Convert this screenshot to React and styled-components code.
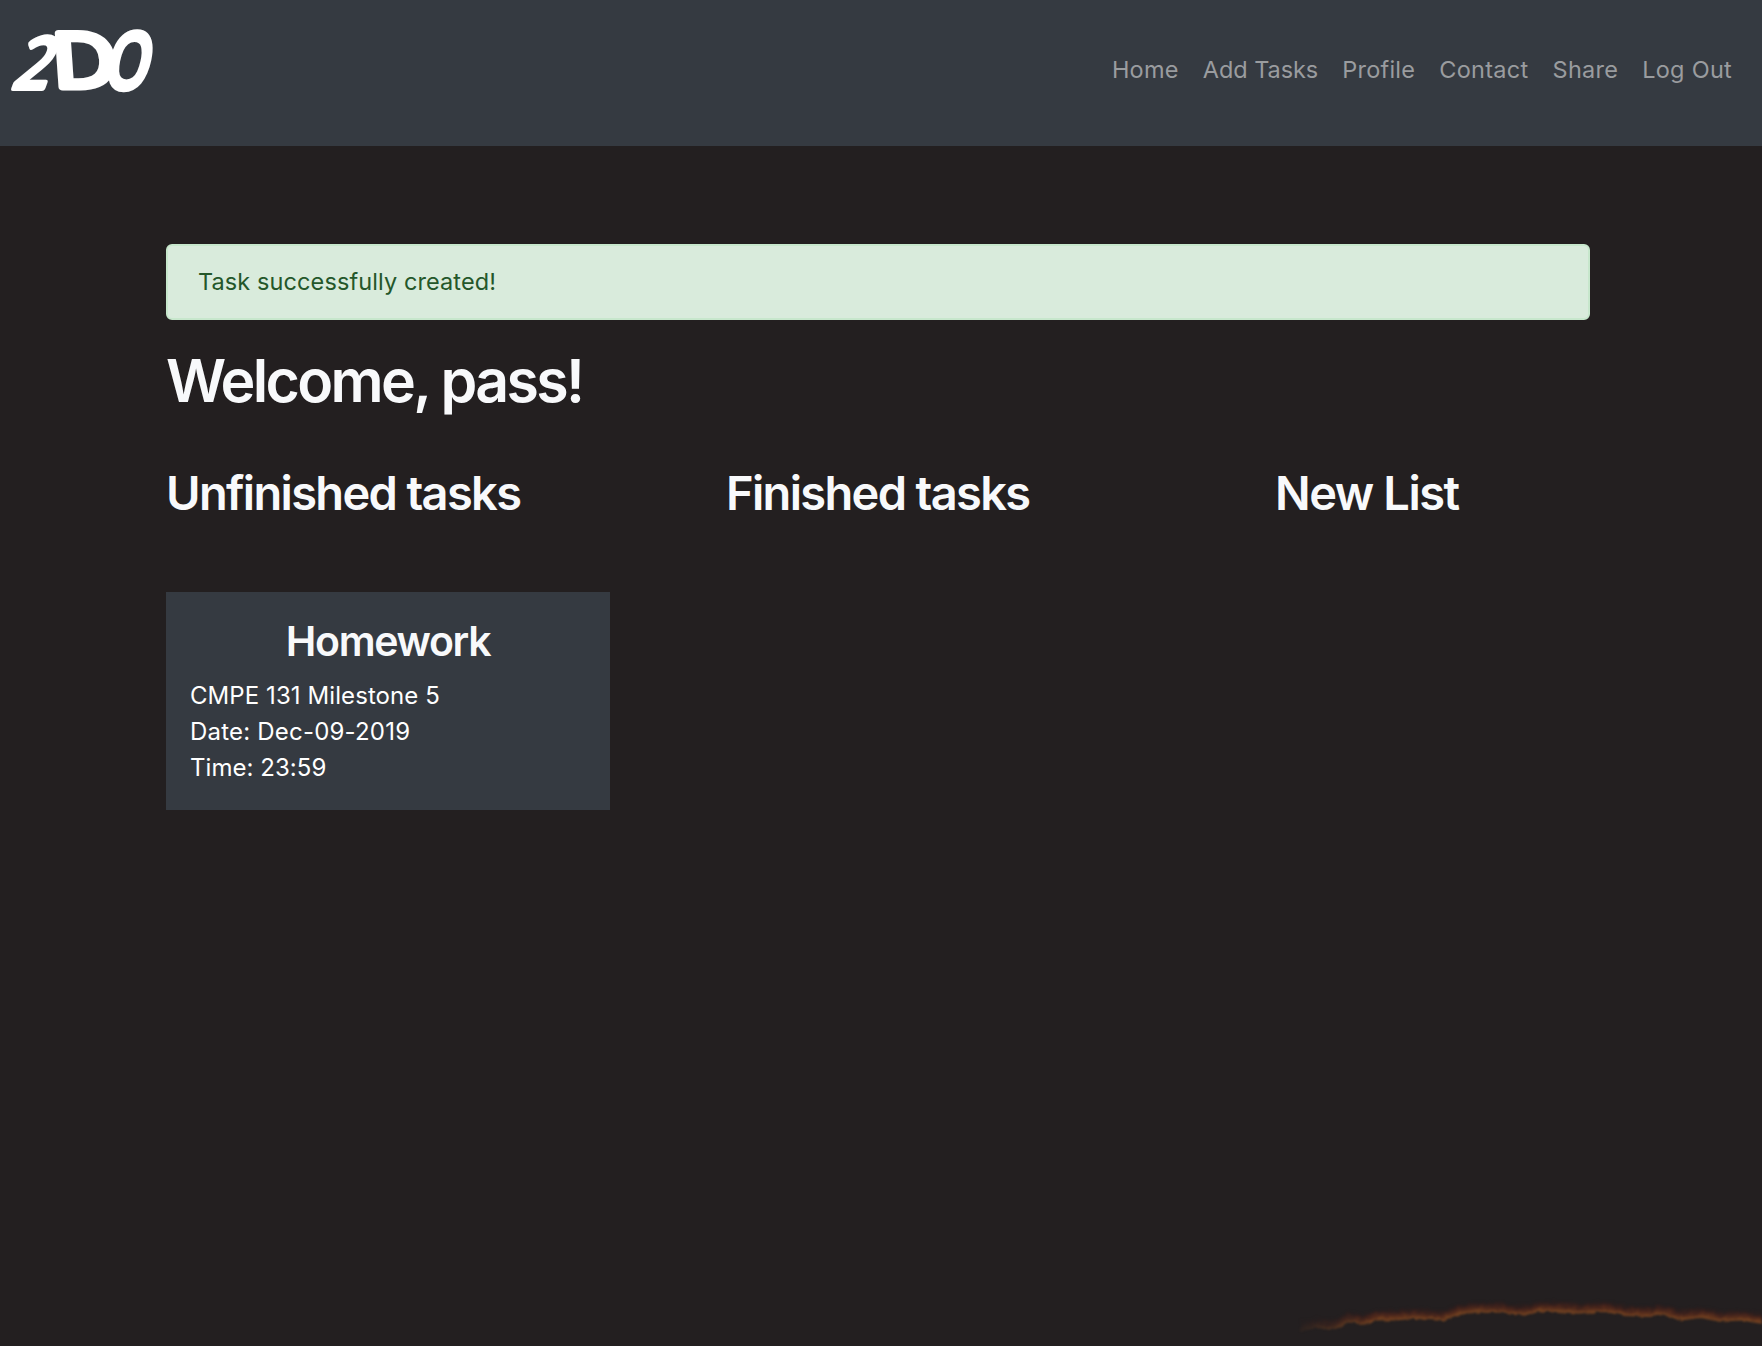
import React from 'react';
import styled, { createGlobalStyle } from 'styled-components';

const GlobalStyle = createGlobalStyle`
  * { box-sizing: border-box; }
  body {
    margin: 0;
    background: #231f20;
    color: #ffffff;
    font: 400 23.5px/36px Inter, "Liberation Sans", sans-serif;
  }
`;

const Page = styled.div`
  display: flex;
  flex-direction: column;
  height: 1346px;
  overflow: hidden;
`;

const Navbar = styled.header`
  display: flex;
  justify-content: space-between;
  height: 146px;
  padding: 12px 18px 0 0;
  background: #353a41;
`;

const Logo = styled.svg`
  display: block;
  width: 180px;
  height: 110px;
  overflow: visible;
  fill: #ffffff;
  stroke: #ffffff;
  stroke-linejoin: round;
  font-family: "Open Sans", sans-serif;
`;

const NavLinks = styled.nav`
  display: flex;
  align-items: flex-start;
  padding-top: 40px;
`;

const NavLink = styled.a`
  padding: 0 12px;
  line-height: 36px;
  color: #9a9c9f;
  letter-spacing: ${(p) => p.$spacing}px;
`;

const Main = styled.main`
  flex: 1;
  width: 1424px;
  margin: 98px 0 0 166px;
`;

const Alert = styled.div`
  height: 76px;
  padding: 18px 30px;
  border: 2px solid #c7e7cc;
  border-radius: 6px;
  background: #d9ebdc;
  color: #24572a;
  letter-spacing: 0.1px;
`;

const Welcome = styled.h1`
  margin: 25px 0 0;
  font-size: 59px;
  line-height: 72px;
  font-weight: 600;
  letter-spacing: -2.65px;
  color: #f8f9fb;
`;

const Columns = styled.section`
  display: grid;
  grid-template-columns: 560px 549px 1fr;
  margin-top: 47px;
`;

const ColumnTitle = styled.h2`
  margin: 0;
  font-size: 47px;
  line-height: 58px;
  font-weight: 600;
  letter-spacing: ${(p) => p.$spacing || -1.67}px;
  color: #f8f9fb;
`;

const Card = styled.article`
  width: 444px;
  height: 218px;
  margin-top: 70px;
  padding: 24px;
  background: #353a41;
`;

const CardTitle = styled.h3`
  margin: 0 0 12px;
  font-size: 41px;
  line-height: 50px;
  font-weight: 600;
  letter-spacing: -1.35px;
  text-align: center;
  color: #f8f9fb;
`;

const CardLine = styled.p`
  margin: 0;
  font-size: 24px;
  letter-spacing: ${(p) => p.$spacing}px;
`;

const Ember = styled.svg`
  display: block;
  width: 472px;
  height: 56px;
  margin-left: auto;
`;

const links = [
  ['Home', 0.26],
  ['Add Tasks', -0.06],
  ['Profile', 0.24],
  ['Contact', 0.3],
  ['Share', 0.26],
  ['Log Out', 0.26],
];

const ridge =
  'M10 41 L28 38 L37 40 L47 38.7 L57 32.7 L65 32.7 L72 35.3 L87 30.3 L107 30.5 L123 28.7 L152 31 L167 25.3 L183 22.7 L210 22.7 L223 25 L235 25.3 L249 22 L265 21.7 L289 23.7 L315 22 L335 26 L360 27 L367 24.7 L380 26.7 L389 30.3 L412 28 L429 31.7 L452 30.3 L472 34';

const glow = [
  [-10, '#3c1d19', 0.25],
  [-8, '#4a211a', 0.4],
  [-6.5, '#562619', 0.5],
  [-5, '#602c1a', 0.6],
  [-3.5, '#6a351c', 0.7],
  [-2, '#763e1f', 0.75],
  [-0.8, '#804822', 0.75],
];

export default function App() {
  return (
    <>
      <GlobalStyle />
      <Page>
        <Navbar>
          <Logo viewBox="0 12 180 110" role="img" aria-label="2DO">
            <text transform="translate(11 88) skewX(-20) scale(.88 1)" fontSize="70" fontWeight="400" strokeWidth="6">2</text>
            <text transform="translate(54 87) skewX(4) scale(1.18 1)" fontSize="75" fontWeight="400" strokeWidth="7">D</text>
            <text transform="translate(102 89) skewX(-12) scale(.72 1)" fontSize="79" fontWeight="600" strokeWidth="5">O</text>
          </Logo>
          <NavLinks>
            {links.map(([label, spacing]) => (
              <NavLink key={label} $spacing={spacing}>{label}</NavLink>
            ))}
          </NavLinks>
        </Navbar>
        <Main>
          <Alert>Task successfully created!</Alert>
          <Welcome>Welcome, pass!</Welcome>
          <Columns>
            <div>
              <ColumnTitle>Unfinished tasks</ColumnTitle>
              <Card>
                <CardTitle>Homework</CardTitle>
                <CardLine $spacing={0.08}>CMPE 131 Milestone 5</CardLine>
                <CardLine $spacing={0.2}>Date: Dec-09-2019</CardLine>
                <CardLine $spacing={0.05}>Time: 23:59</CardLine>
              </Card>
            </div>
            <ColumnTitle>Finished tasks</ColumnTitle>
            <ColumnTitle $spacing={-1.45}>New List</ColumnTitle>
          </Columns>
        </Main>
        <Ember viewBox="0 0 472 56" aria-hidden="true">
          <defs>
            <linearGradient id="fade" gradientUnits="userSpaceOnUse" x1="0" y1="0" x2="80" y2="0">
              <stop offset="0" stopColor="#000" />
              <stop offset=".35" stopColor="#555" />
              <stop offset="1" stopColor="#fff" />
            </linearGradient>
            <mask id="tip" maskUnits="userSpaceOnUse" x="0" y="0" width="472" height="56">
              <rect width="472" height="56" fill="url(#fade)" />
            </mask>
            <filter id="soft" filterUnits="userSpaceOnUse" x="0" y="0" width="472" height="56" colorInterpolationFilters="sRGB">
              <feTurbulence type="fractalNoise" baseFrequency="0.18" numOctaves="3" seed="4" result="noise" />
              <feDisplacementMap in="SourceGraphic" in2="noise" scale="4" xChannelSelector="R" yChannelSelector="G" />
              <feGaussianBlur stdDeviation="0.9" />
            </filter>
          </defs>
          <g mask="url(#tip)">
            <g filter="url(#soft)" fill="none" strokeWidth="1.8" strokeLinejoin="round">
              {glow.map(([dy, color, opacity]) => (
                <path key={dy} d={ridge} transform={`translate(0 ${dy})`} stroke={color} opacity={opacity} />
              ))}
            </g>
          </g>
        </Ember>
      </Page>
    </>
  );
}
